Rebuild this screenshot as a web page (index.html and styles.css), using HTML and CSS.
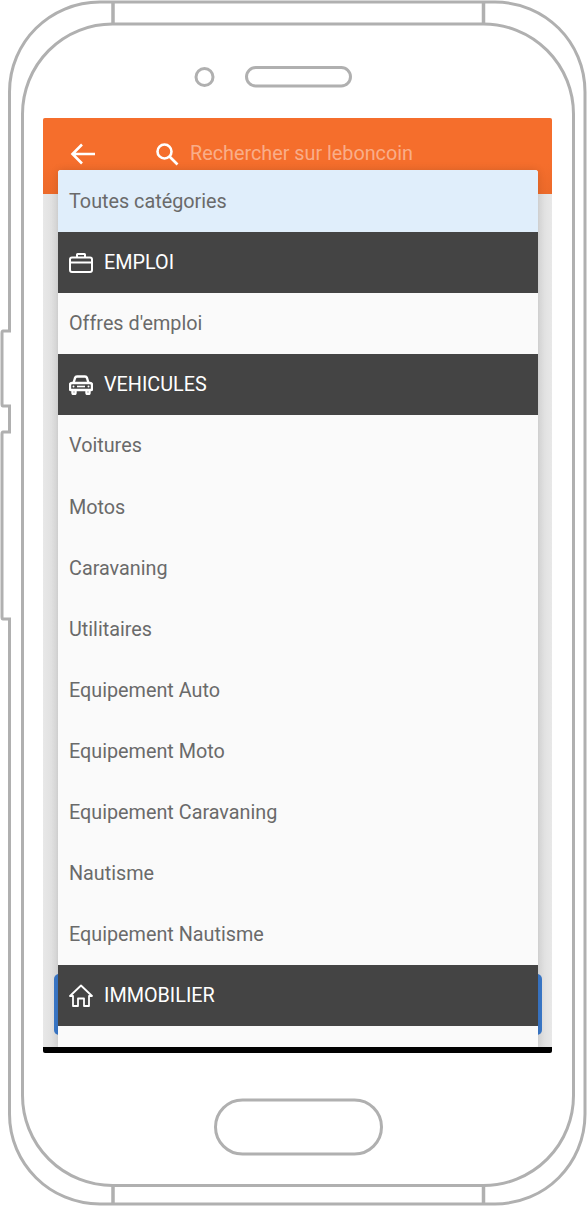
FILE: index.html
```html
<!DOCTYPE html>
<html lang="fr">
<head>
    <meta charset="UTF-8">
    <meta name="viewport" content="width=device-width, initial-scale=1.0">
    <title>leboncoin</title>
    <link rel="stylesheet" href="styles.css">
</head>
<body>
    <div class="phone">
        <svg class="frame" width="588" height="1206" viewBox="0 0 588 1206" fill="none" stroke="#b0b0b0" stroke-width="3">
            <path d="M100 2H495C545 2 585 42 585 92V1114C585 1164 545 1204 495 1204H100C50 1204 9.500 1164 9.500 1114V619H3Q2 619 2 617V434Q2 432 3 432H9.500V406H3Q2 406 2 404V333Q2 331 3 331H9.500V92C9.500 42 50 2 100 2Z"/>
            <rect x="22.500" y="24" width="551" height="1161.500" rx="90"/>
            <path d="M113 2V24M483.500 2V24M113 1185V1204M483.500 1185V1204" stroke-width="3.500"/>
            <circle cx="204.500" cy="77" r="8.500"/>
            <rect x="246.500" y="67.500" width="104" height="18.500" rx="9.250"/>
            <rect x="215.500" y="1100" width="166" height="54" rx="27"/>
        </svg>

        <div class="screen">
            <header class="toolbar">
                <svg class="back-icon" width="26" height="24" viewBox="0 0 26 24" fill="none" stroke="#fff" stroke-width="2.600">
                    <path d="M25 12H3M12 2.500L2.500 12L12 21.500"/>
                </svg>
                <svg class="search-icon" width="24" height="24" viewBox="0 0 24 24" fill="none" stroke="#fff" stroke-width="2.600">
                    <circle cx="9.500" cy="9.500" r="7"/>
                    <path d="M14.500 14.500L22.500 22.500"/>
                </svg>
                <span class="search-text">Rechercher sur leboncoin</span>
            </header>
            <div class="page-body"></div>
            <div class="submit-button"></div>

            <ul class="category-list">
                <li class="item selected">Toutes catégories</li>
                <li class="item group">
                    <svg width="24" height="20" viewBox="0 0 24 20" fill="none" stroke="#fff" stroke-width="2">
                        <rect x="1" y="4.500" width="22" height="14.500" rx="2"/>
                        <path d="M8 4.500V1.500Q8 1 8.500 1H15.500Q16 1 16 1.500V4.500M1 9.500H23"/>
                    </svg>
                    EMPLOI
                </li>
                <li class="item">Offres d'emploi</li>
                <li class="item group">
                    <svg width="24" height="20" viewBox="0 0 24 20" fill="none" stroke="#fff" stroke-width="2.400">
                        <path d="M4.500 8L6 3Q6.500 1.500 8 1.500H16Q17.500 1.500 18 3L19.500 8"/>
                        <path d="M3 8H21Q23 8 23 10V14Q23 15 22 15H2Q1 15 1 14V10Q1 8 3 8Z"/>
                        <path d="M8 11.500H16" stroke-width="1.600"/>
                        <path d="M3.500 15V18Q3.500 19 4.500 19H5.500Q6.500 19 6.500 18V15M17.500 15V18Q17.500 19 18.500 19H19.500Q20.500 19 20.500 18V15"/>
                        <circle cx="4.500" cy="11.500" r="1" fill="#fff" stroke="none"/>
                        <circle cx="19.500" cy="11.500" r="1" fill="#fff" stroke="none"/>
                    </svg>
                    VEHICULES
                </li>
                <li class="item">Voitures</li>
                <li class="item">Motos</li>
                <li class="item">Caravaning</li>
                <li class="item">Utilitaires</li>
                <li class="item">Equipement Auto</li>
                <li class="item">Equipement Moto</li>
                <li class="item">Equipement Caravaning</li>
                <li class="item">Nautisme</li>
                <li class="item">Equipement Nautisme</li>
                <li class="item group">
                    <svg width="24" height="24" viewBox="0 0 24 24" fill="none" stroke="#fff" stroke-width="1.800">
                        <path d="M1 12L12 1.500L23 12H20V22H15V14.500H9V22H4V12Z" stroke-linejoin="round"/>
                    </svg>
                    IMMOBILIER
                </li>
            </ul>
        </div>
    </div>
</body>
</html>
```

FILE: styles.css
```css
body {
    margin: 0;
    background: #fff;
    font-family: Roboto, "Liberation Sans", sans-serif;
    font-size: 19.8px;
}
.phone {
    position: relative;
    width: 588px;
    height: 1206px;
    padding: 118px 36px 0 43px;
    box-sizing: border-box;
    overflow: hidden;
}
.frame {
    position: absolute;
    top: 0;
    left: 0;
}
.screen {
    position: relative;
    display: flex;
    flex-direction: column;
    height: 935px;
    border-bottom: 6px solid #000;
    border-radius: 2px;
    box-sizing: border-box;
    background: #e4e4e4;
}
.toolbar {
    display: flex;
    align-items: center;
    height: 76px;
    padding: 0 0 5px 27px;
    box-sizing: border-box;
    border-radius: 2px 2px 0 0;
    background: linear-gradient(#f56e2c 60%, #ec6a2a);
}
.back-icon {
    margin-right: 59px;
}
.search-icon {
    margin-right: 11px;
}
.search-text {
    color: rgba(255, 255, 255, 0.45);
}
.page-body {
    flex: 1;
    background: linear-gradient(90deg, #e8e8e8, #dcdcdc 15px, #dcdcdc 494px, #e8e8e8);
}
.submit-button {
    position: absolute;
    left: 11px;
    right: 10px;
    top: 856px;
    height: 61px;
    border-radius: 5px;
    background: #3a78c9;
}
.category-list {
    position: absolute;
    top: 52px;
    left: 15px;
    width: 480px;
    height: 877px;
    margin: 0;
    padding: 0;
    list-style: none;
    overflow: hidden;
    background: #fafafa;
    border-radius: 3px 3px 0 0;
    box-shadow: 0 0 8px rgba(0, 0, 0, 0.12);
}
.item {
    display: flex;
    align-items: center;
    height: 61.1px;
    padding-left: 11px;
    color: #6a6a6a;
    box-sizing: border-box;
}
.selected {
    height: 62.1px;
    padding-top: 1px;
    background: #e0eefb;
}
.group {
    gap: 11px;
    background: #444;
    color: #fff;
}
```
